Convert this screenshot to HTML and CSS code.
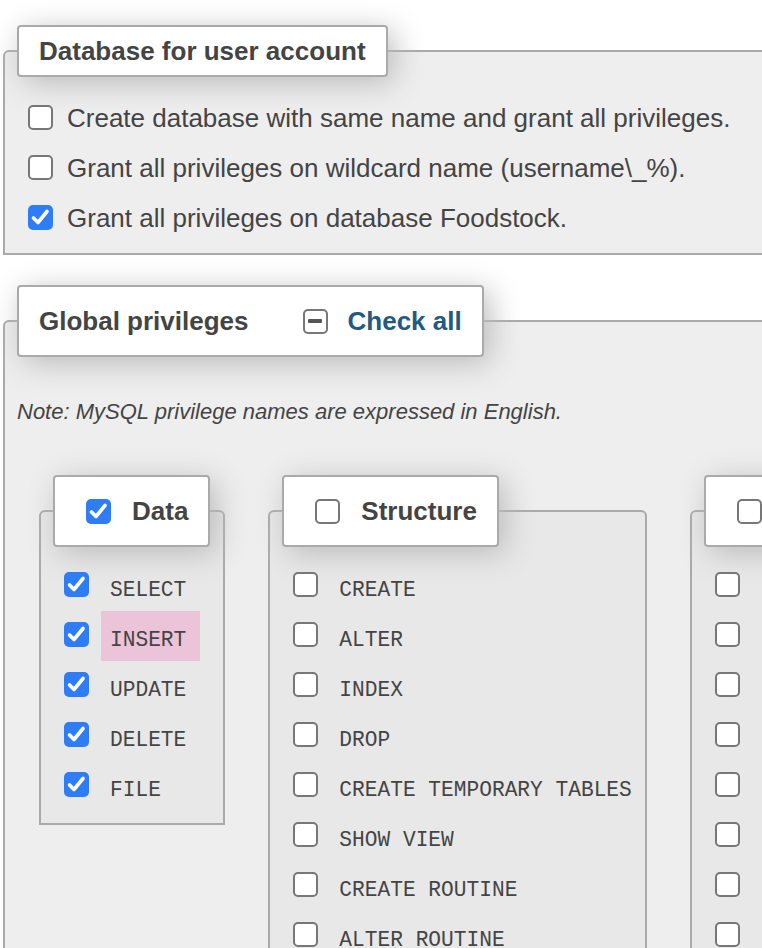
FILE: index.html
```html
<!DOCTYPE html>
<html lang="en">
<head>
<meta charset="utf-8">
<title>Privileges</title>
<link rel="stylesheet" href="styles.css">
</head>
<body>
<div class="page">
  <fieldset class="fs fs-db">
    <legend class="lg">Database for user account</legend>
    <div class="opt"><span class="cb"></span><span>Create database with same name and grant all privileges.</span></div>
    <div class="opt"><span class="cb"></span><span>Grant all privileges on wildcard name (username\_%).</span></div>
    <div class="opt"><span class="cb on"><svg viewBox="0 0 25 25"><path d="M5.5 13 L10 17.5 L19 6.5"/></svg></span><span>Grant all privileges on database Foodstock.</span></div>
  </fieldset>

  <fieldset class="fs fs-priv">
    <legend class="lg lg-tall"><span class="lg-row"><span>Global privileges</span><span class="cb cb-mixed"><i></i></span><a class="checkall" href="#">Check all</a></span></legend>
    <p class="note">Note: MySQL privilege names are expressed in English.</p>
    <div class="groups">
      <fieldset class="grp">
        <legend class="lg lg-tall"><span class="lg-row"><span class="cb on"><svg viewBox="0 0 25 25"><path d="M5.5 13 L10 17.5 L19 6.5"/></svg></span><span>Data</span></span></legend>
        <div class="priv"><span class="cb on"><svg viewBox="0 0 25 25"><path d="M5.5 13 L10 17.5 L19 6.5"/></svg></span><span class="pname">SELECT</span></div>
        <div class="priv"><span class="cb on"><svg viewBox="0 0 25 25"><path d="M5.5 13 L10 17.5 L19 6.5"/></svg></span><span class="pname marked">INSERT</span></div>
        <div class="priv"><span class="cb on"><svg viewBox="0 0 25 25"><path d="M5.5 13 L10 17.5 L19 6.5"/></svg></span><span class="pname">UPDATE</span></div>
        <div class="priv"><span class="cb on"><svg viewBox="0 0 25 25"><path d="M5.5 13 L10 17.5 L19 6.5"/></svg></span><span class="pname">DELETE</span></div>
        <div class="priv"><span class="cb on"><svg viewBox="0 0 25 25"><path d="M5.5 13 L10 17.5 L19 6.5"/></svg></span><span class="pname">FILE</span></div>
      </fieldset>
      <fieldset class="grp">
        <legend class="lg lg-tall"><span class="lg-row"><span class="cb"></span><span>Structure</span></span></legend>
        <div class="priv"><span class="cb"></span><span class="pname">CREATE</span></div>
        <div class="priv"><span class="cb"></span><span class="pname">ALTER</span></div>
        <div class="priv"><span class="cb"></span><span class="pname">INDEX</span></div>
        <div class="priv"><span class="cb"></span><span class="pname">DROP</span></div>
        <div class="priv"><span class="cb"></span><span class="pname">CREATE TEMPORARY TABLES</span></div>
        <div class="priv"><span class="cb"></span><span class="pname">SHOW VIEW</span></div>
        <div class="priv"><span class="cb"></span><span class="pname">CREATE ROUTINE</span></div>
        <div class="priv"><span class="cb"></span><span class="pname">ALTER ROUTINE</span></div>
      </fieldset>
      <fieldset class="grp">
        <legend class="lg lg-tall"><span class="lg-row"><span class="cb"></span><span>Administration</span></span></legend>
        <div class="priv"><span class="cb"></span></div>
        <div class="priv"><span class="cb"></span></div>
        <div class="priv"><span class="cb"></span></div>
        <div class="priv"><span class="cb"></span></div>
        <div class="priv"><span class="cb"></span></div>
        <div class="priv"><span class="cb"></span></div>
        <div class="priv"><span class="cb"></span></div>
        <div class="priv"><span class="cb"></span></div>
      </fieldset>
    </div>
  </fieldset>
</div>
</body>
</html>
```

FILE: styles.css
```css
html, body {
  overflow: hidden;
}
body {
  margin: 0;
  background: #fff;
  color: #444;
  font-family: "Liberation Sans", Arial, sans-serif;
}
.page {
  width: 1100px;
  padding-top: 25px;
}
.fs {
  margin: 0 0 0 3px;
  width: 900px;
  border: 2px solid #aaa;
  border-radius: 6px 6px 0 0;
  background: #eee;
  padding: 16px 12px 10px;
  min-width: 0;
}
.fs-priv {
  margin-top: 30px;
  padding: 43px 12px 0;
}
.lg {
  background: #fff;
  border: 2px solid #aaa;
  border-radius: 4px;
  padding: 10px 20px;
  font-size: 26px;
  line-height: 28px;
  font-weight: bold;
  box-shadow: 6px 6px 30px #bbb;
}
.lg-tall {
  padding: 20px;
}
.lg-row {
  display: flex;
  align-items: center;
  height: 28px;
}
.cb {
  box-sizing: border-box;
  display: block;
  flex: none;
  width: 25px;
  height: 25px;
  border: 2px solid #777;
  border-radius: 5px;
  background: #fff;
}
.cb.on {
  border: 0;
  background: #2f7df6;
}
.cb svg {
  display: block;
  width: 25px;
  height: 25px;
  fill: none;
  stroke: #fff;
  stroke-width: 3.6;
  stroke-linecap: round;
  stroke-linejoin: round;
}
.cb-mixed i {
  display: block;
  width: 14px;
  height: 4px;
  margin: 8.5px auto 0;
  border-radius: 1px;
  background: #555;
}
.fs-priv > legend .cb {
  margin: 0 20px 0 54px;
}
.checkall {
  color: #235a81;
  text-decoration: none;
}
.opt {
  display: flex;
  align-items: center;
  height: 50px;
  font-size: 26px;
}
.opt .cb {
  margin: 0 14px 2px 11px;
}
.note {
  margin: 0;
  font-size: 22px;
  line-height: 24px;
  font-style: italic;
}
.groups {
  display: flex;
  align-items: flex-start;
  gap: 43px;
  margin: 51px 0 0 22px;
}
.grp {
  flex: none;
  margin: 0;
  min-width: 0;
  border: 2px solid #aaa;
  border-radius: 6px 6px 0 0;
  background: #e8e8e8;
  padding: 14px 13px 12px 12px;
}
.grp > legend .cb {
  margin: 0 21px 0 11px;
}
.priv {
  display: flex;
  align-items: center;
  height: 50px;
}
.priv .cb {
  margin: 0 21px 3px 11px;
}
.pname {
  display: block;
  height: 50px;
  font-family: "Liberation Mono", "Courier New", monospace;
  font-size: 21.2px;
  line-height: 58px;
  white-space: nowrap;
}
.pname.marked {
  background: #ebc4da;
  margin-left: -9px;
  padding: 0 14px 0 9px;
}
```
